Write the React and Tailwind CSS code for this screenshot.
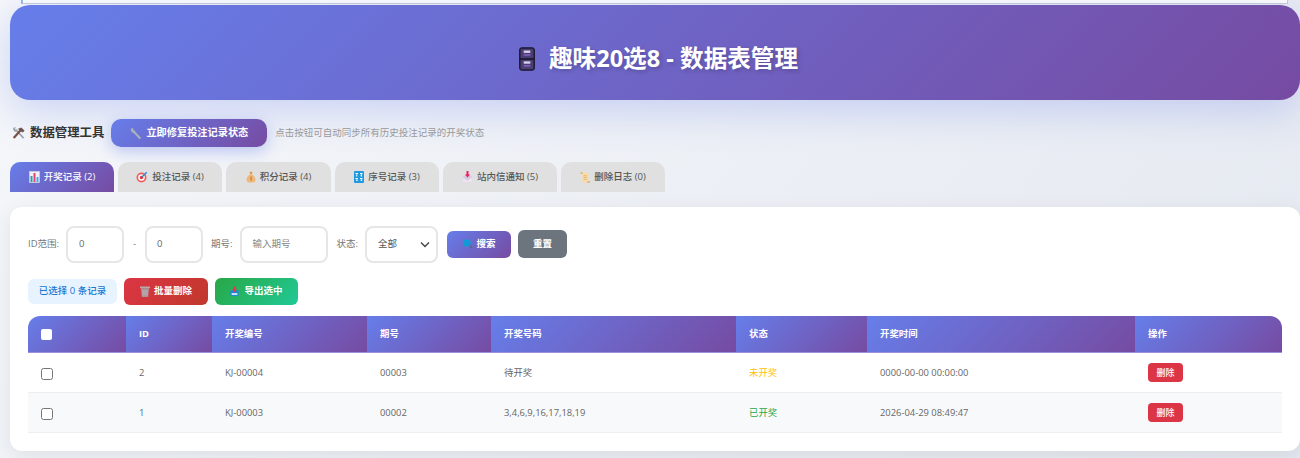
import React from 'react';

function IconBars() {
  return (
    <svg width="11" height="12" viewBox="0 0 11 12">
      <rect x="0.5" y="0.5" width="10" height="11" fill="#eef2f5" stroke="#cfd8dc" strokeWidth="0.6" />
      <rect x="1.5" y="5" width="2" height="6" fill="#26a69a" />
      <rect x="4.5" y="2" width="2" height="9" fill="#ec407a" />
      <rect x="7.5" y="6" width="2" height="5" fill="#42a5f5" />
    </svg>
  );
}
function IconTarget() {
  return (
    <svg width="12" height="12" viewBox="0 0 12 12">
      <circle cx="5.5" cy="6.5" r="5" fill="#f25c5c" />
      <circle cx="5.5" cy="6.5" r="3.3" fill="#fff" />
      <circle cx="5.5" cy="6.5" r="1.8" fill="#e53935" />
      <path d="M6 6L10.5 1.5" stroke="#2f80c8" strokeWidth="1.3" />
      <path d="M9 1.5l2-.8-.6 2.2z" fill="#42a5f5" />
    </svg>
  );
}
function IconBag() {
  return (
    <svg width="10" height="12" viewBox="0 0 10 12">
      <path d="M3.5 0.8h3L6 3.5H4z" fill="#d9a05b" />
      <path d="M4 3.5h2c2 1.4 3.6 3.2 3.6 5.2 0 2-1.6 2.8-4.6 2.8S.4 10.7.4 8.7C.4 6.7 2 4.9 4 3.5z" fill="#f0b878" />
      <rect x="4.5" y="5.5" width="1.2" height="4" fill="#b97a3a" />
    </svg>
  );
}
function IconNumbers() {
  return (
    <svg width="10" height="12" viewBox="0 0 10 12">
      <rect width="10" height="12" rx="1" fill="#1e9be0" />
      <rect x="1.5" y="2" width="2.4" height="1.1" fill="#fff" />
      <rect x="6.1" y="2" width="2.4" height="1.1" fill="#fff" />
      <rect x="2.2" y="3.5" width="1.1" height="2" fill="#fff" />
      <rect x="6.7" y="3.5" width="1.4" height="2" fill="#fff" />
      <rect x="1.5" y="7" width="2.4" height="1.1" fill="#fff" />
      <rect x="6.1" y="7" width="2.4" height="1.1" fill="#fff" />
      <rect x="2.2" y="8.5" width="1.4" height="1.5" fill="#fff" />
      <rect x="6.7" y="8.5" width="1.4" height="1.5" fill="#fff" />
    </svg>
  );
}
function IconInbox() {
  return (
    <svg width="11" height="12" viewBox="0 0 11 12">
      <path d="M.5 6L5.5 2.5 10.5 6v5.5H.5z" fill="#d8cbe0" />
      <path d="M.5 6l5 3.5L10.5 6v5.5H.5z" fill="#ebe3ef" />
      <path d="M4.5 0h2v3.5H8l-2.5 3-2.5-3h1.5z" fill="#e91e63" />
    </svg>
  );
}
function IconScroll() {
  return (
    <svg width="10" height="11" viewBox="0 0 11 12">
      <path d="M2.5 1H9v10.500H3z" fill="#fbd9a0" />
      <path d="M0 .5h3V2H1z" fill="#e0a860" />
      <path d="M8 10.200h3v1.500H8z" fill="#e0a860" />
      <path d="M4 4h3.500M4 6h3.500M4 8h3.500" stroke="#e2a55c" strokeWidth="0.7" />
    </svg>
  );
}
function IconCabinet() {
  return (
    <svg width="16" height="24" viewBox="0 0 17 25">
      <rect x="0.5" y="0.5" width="16" height="24" rx="2.5" fill="#2f2748" stroke="#1e1933" />
      <rect x="2" y="2" width="13" height="9.5" rx="0.8" fill="#4a3f74" />
      <rect x="2" y="13.5" width="13" height="9.5" rx="0.8" fill="#4a3f74" />
      <path d="M0.5 12.5h16" stroke="#15112a" strokeWidth="1" />
      <rect x="5" y="3.5" width="7" height="2.5" fill="#d8d0ea" />
      <rect x="5" y="15" width="7" height="2.5" fill="#d8d0ea" />
      <rect x="5" y="7.5" width="7" height="1.5" fill="#8a63c4" />
      <rect x="5" y="19" width="7" height="1.5" fill="#8a63c4" />
    </svg>
  );
}
function IconTools() {
  return (
    <svg width="13" height="12" viewBox="0 0 14 13">
      <path d="M12.5 12L5 4" stroke="#9aa5ae" strokeWidth="1.8" />
      <path d="M1 2.2A2.3 2.3 0 0 1 4.2.5L3.2 2l1 1 1.5-.8A2.3 2.3 0 0 1 2.5 5z" fill="#9aa5ae" />
      <path d="M1.8 12L9 3.8" stroke="#7a4f42" strokeWidth="2.4" />
      <path d="M6.5 1.800L10 .5l3.500 3.300-1.700 2.200-2.800-1.400z" fill="#6b5750" />
    </svg>
  );
}
function IconWrench() {
  return (
    <svg width="11" height="11" viewBox="0 0 11 11">
      <path d="M9.7 10L3.500 3.300" stroke="#a9b2bb" strokeWidth="2" strokeLinecap="round" />
      <path d="M.6 1.800A2.300 2.300 0 0 1 3.700.4L2.700 1.900l.8.900 1.500-.8a2.300 2.300 0 0 1-3 2.500z" fill="#a9b2bb" />
    </svg>
  );
}
function IconSearch() {
  return (
    <svg width="10" height="10" viewBox="0 0 12 12">
      <path d="M7 7l4 4" stroke="#5c6470" strokeWidth="1.6" />
      <circle cx="4.8" cy="4.8" r="4.4" fill="#0f9ad6" />
    </svg>
  );
}
function IconTrash() {
  return (
    <svg width="10" height="11" viewBox="0 0 10 11">
      <rect x="0" y="0.5" width="10" height="1.8" fill="#b9a9a9" />
      <path d="M1 2.300h8L8.200 11H1.800z" fill="#a8959a" />
      <path d="M3 4v5.500M5 4v5.500M7 4v5.500" stroke="#c9babd" strokeWidth="0.7" />
    </svg>
  );
}
function IconExport() {
  return (
    <svg width="9" height="11" viewBox="0 0 11 12">
      <rect x="0.5" y="4.5" width="10" height="7" rx="1.5" fill="#1f88d8" />
      <rect x="2" y="8" width="7" height="2.2" fill="#d4ecfb" />
      <path d="M4.3 0h2.400v3h1.600L5.500 7 2.700 3h1.600z" fill="#e8334f" />
    </svg>
  );
}

const grad = 'bg-[linear-gradient(135deg,#667eea_0%,#764ba2_100%)]';

const tabs = [
  { icon: <IconTarget />, label: '投注记录', count: 4, w: 'w-[104px]' },
  { icon: <IconBag />, label: '积分记录', count: 4, w: 'w-[105px]' },
  { icon: <IconNumbers />, label: '序号记录', count: 3, w: 'w-[104px]' },
  { icon: <IconInbox />, label: '站内信通知', count: 5, w: 'w-[114px]' },
  { icon: <IconScroll />, label: '删除日志', count: 0, w: 'w-[104px]' },
];

const heads = [
  { label: '', w: 'w-[98px]' },
  { label: 'ID', w: 'w-[86px]' },
  { label: '开奖编号', w: 'w-[155px]' },
  { label: '期号', w: 'w-[124px]' },
  { label: '开奖号码', w: 'w-[245px]' },
  { label: '状态', w: 'w-[131px]' },
  { label: '开奖时间', w: 'w-[268px]' },
  { label: '操作', w: 'w-[147px]' },
];

const rows = [
  { id: 2, idc: 'text-[#666]', code: 'KJ-00004', no: '00003', nums: '待开奖', st: '未开奖', stc: 'text-[#ffc107]', time: '0000-00-00 00:00:00', bg: 'bg-white' },
  { id: 1, idc: 'text-[#3f6f9f]', code: 'KJ-00003', no: '00002', nums: '3,4,6,9,16,17,18,19', st: '已开奖', stc: 'text-[#28a745]', time: '2026-04-29 08:49:47', bg: 'bg-[#f8f9fa]' },
];

function Check({ className = '' }) {
  return <span className={`block h-[12px] w-[12px] rounded-[2.5px] border border-[#767676] bg-white ${className}`} />;
}

export default function App() {
  return (
    <div className="h-[458px] w-[1300px] overflow-hidden bg-[linear-gradient(135deg,#f5f7fa_0%,#e4e8f0_100%)] pl-[10px] font-['Open_Sans','Noto_Sans_CJK_SC',sans-serif] text-[#666]">
      <div className="ml-[11px] mr-[12px] h-[4px] border-b border-r border-[#c9ccd6] border-l-[2px] border-l-[#8fbdf0] bg-white" />
      <header className={`mt-[1px] flex h-[95px] items-center justify-center rounded-[20px] pt-[13px] ${grad} shadow-[0_10px_40px_rgba(102,126,234,0.3)]`}>
        <div className="flex items-center gap-[14px] pl-[7px] text-[23.6px] leading-none font-bold text-white [text-shadow:2px_2px_4px_rgba(0,0,0,0.2)]">
          <IconCabinet />
          <span>趣味20选8 - 数据表管理</span>
        </div>
      </header>

      <div className="mt-[19px] flex h-[28px] items-center">
        <span className="ml-[2px] flex items-center gap-[5px] text-[12.4px] font-bold text-[#333]">
          <IconTools />
          <span>数据管理工具</span>
        </span>
        <button className={`ml-[7px] flex h-[28px] w-[156px] items-center justify-center gap-[5px] rounded-[10px] ${grad} text-[10.2px] font-bold text-white shadow-[0_4px_15px_rgba(102,126,234,0.4)]`}>
          <IconWrench />
          <span>立即修复投注记录状态</span>
        </button>
        <span className="ml-[8px] text-[9.5px] text-[#999]">点击按钮可自动同步所有历史投注记录的开奖状态</span>
      </div>

      <nav className="mt-[15px] flex h-[30px] gap-[4px]">
        <div className={`flex w-[104px] items-center justify-center gap-[4px] rounded-t-[10px] ${grad} text-[9.5px] font-medium text-white`}>
          <IconBars />
          <span>开奖记录 (2)</span>
        </div>
        {tabs.map((t) => (
          <div key={t.label} className={`flex ${t.w} items-center justify-center gap-[4px] rounded-t-[10px] bg-[#e0e0e0] text-[9.5px] font-medium text-[#555]`}>
            {t.icon}
            <span>{t.label} ({t.count})</span>
          </div>
        ))}
      </nav>

      <main className="mt-[15px] h-[244px] rounded-[12px] bg-white px-[18px] pt-[18px] shadow-[0_5px_20px_rgba(0,0,0,0.08)]">
        <div className="flex h-[38px] items-center text-[9.5px] text-[#777]">
          <span>ID范围:</span>
          <div className="ml-[7px] flex h-[37px] w-[58px] items-center rounded-[8px] border-2 border-[#e6e6e6] pl-[11px] text-[#666]">0</div>
          <span className="ml-[9px]">-</span>
          <div className="ml-[9px] flex h-[37px] w-[58px] items-center rounded-[8px] border-2 border-[#e6e6e6] pl-[10px] text-[#666]">0</div>
          <span className="ml-[8px]">期号:</span>
          <div className="ml-[7px] flex h-[37px] w-[88px] items-center rounded-[8px] border-2 border-[#e6e6e6] pl-[11px] text-[#888]">输入期号</div>
          <span className="ml-[9px]">状态:</span>
          <div className="ml-[7px] flex h-[37px] w-[73px] items-center justify-between rounded-[8px] border-2 border-[#e6e6e6] pl-[11px] pr-[5px] text-[#555]">
            <span>全部</span>
            <svg width="12" height="12" viewBox="0 0 12 12" fill="none"><path d="M2 4.5L6 8.5l4-4" stroke="#444" strokeWidth="1.4" /></svg>
          </div>
          <button className={`ml-[9px] flex h-[27px] w-[64px] items-center justify-center gap-[4px] rounded-[6px] ${grad} text-[9.5px] font-bold text-white`}>
            <IconSearch />
            <span>搜索</span>
          </button>
          <button className="ml-[7px] flex h-[28px] w-[49px] items-center justify-center rounded-[6px] bg-[#6c757d] text-[9.5px] font-bold text-white">重置</button>
        </div>

        <div className="mt-[15px] flex h-[27px] items-center">
          <span className="flex h-[25px] w-[89px] items-center justify-center rounded-[6px] bg-[#e7f3ff] text-[9.5px] font-medium text-[#1976d2]">已选择 0 条记录</span>
          <button className="ml-[7px] flex h-[27px] w-[84px] items-center justify-center gap-[4px] rounded-[6px] bg-[linear-gradient(135deg,#dc3545,#c0392b)] text-[9.5px] font-bold text-white">
            <IconTrash />
            <span>批量删除</span>
          </button>
          <button className="ml-[7px] flex h-[27px] w-[83px] items-center justify-center gap-[5px] rounded-[6px] bg-[linear-gradient(135deg,#28a745,#20c997)] text-[9.5px] font-bold text-white">
            <IconExport />
            <span>导出选中</span>
          </button>
        </div>

        <table className="mt-[11px] w-[1254px] table-fixed border-collapse text-[9.4px]">
          <thead>
            <tr className="h-[36px]">
              {heads.map((h, i) => (
                <th
                  key={i}
                  className={`${h.w} ${grad} border-b border-[#9d8fd8] px-[13px] pt-[1px] text-left font-bold text-white ${i === 0 ? 'rounded-tl-[12px]' : ''} ${i === heads.length - 1 ? 'rounded-tr-[12px]' : ''}`}
                >
                  {i === 0 ? <span className="block h-[11px] w-[11px] rounded-[2px] bg-white" /> : h.label}
                </th>
              ))}
            </tr>
          </thead>
          <tbody>
            {rows.map((r) => (
              <tr key={r.id} className={`h-[40px] border-b border-[#eeeeee] ${r.bg}`}>
                <td className="px-[13px]"><Check className="mt-[3px]" /></td>
                <td className={`px-[13px] pt-[2px] ${r.idc}`}>{r.id}</td>
                <td className="px-[13px] pt-[2px]">{r.code}</td>
                <td className="px-[13px] pt-[2px]">{r.no}</td>
                <td className="px-[13px] pt-[2px]">{r.nums}</td>
                <td className={`px-[13px] pt-[2px] ${r.stc}`}>{r.st}</td>
                <td className="px-[13px] pt-[2px]">{r.time}</td>
                <td className="px-[13px] pt-[1px]">
                  <button className="flex h-[19px] w-[35px] items-center justify-center rounded-[4px] bg-[#dc3545] text-[9px] font-medium text-white">删除</button>
                </td>
              </tr>
            ))}
          </tbody>
        </table>
      </main>
    </div>
  );
}
